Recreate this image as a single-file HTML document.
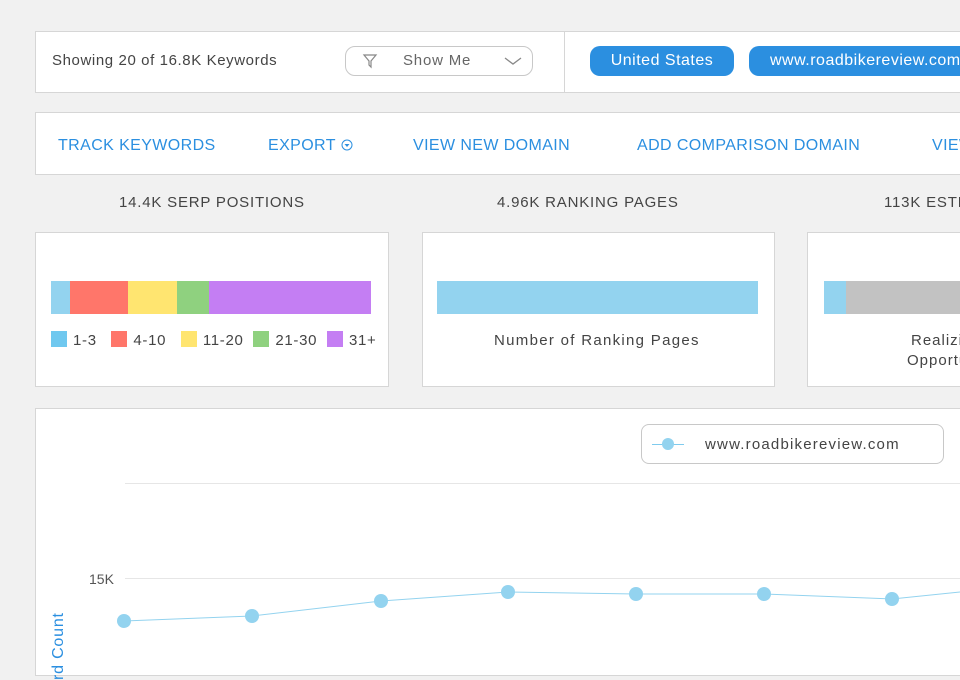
<!DOCTYPE html>
<html><head><style>
body{margin:0;width:960px;height:680px;background:#f1f1f1;font-family:"Liberation Sans",sans-serif;position:relative;overflow:hidden;color:#444}
.box{position:absolute;background:#fff;border:1px solid #d6d6d6;box-sizing:border-box}
.t{position:absolute;white-space:nowrap}
.nav{position:absolute;top:137px;color:#2b8fe0;font-size:16px;letter-spacing:.4px;white-space:nowrap}
.pill{position:absolute;top:46px;height:30px;background:#2b8fe0;border-radius:10px;color:#fff;font-size:16px;line-height:30px;text-align:center;letter-spacing:.5px;white-space:nowrap}
.hd{position:absolute;top:194px;font-size:15px;letter-spacing:.8px;color:#444;white-space:nowrap}
.sw{display:inline-block;width:16px;height:16px;vertical-align:-2px;margin-right:6px}
</style></head><body>
<div class="box" style="left:35px;top:31px;width:940px;height:62px"></div>
<div style="position:absolute;left:564px;top:32px;width:1px;height:60px;background:#d6d6d6"></div>
<div class="t" style="left:52px;top:52px;font-size:15px;letter-spacing:.6px">Showing 20 of 16.8K Keywords</div>
<div style="position:absolute;left:345px;top:46px;width:188px;height:30px;border:1px solid #c8c8c8;border-radius:10px;box-sizing:border-box"></div>
<svg style="position:absolute;left:362px;top:53px" width="16" height="16"><path d="M2 2H14L9 8V14L7 12V8Z" fill="none" stroke="#888" stroke-width="1.2"/></svg>
<div class="t" style="left:403px;top:52px;font-size:15px;color:#666;letter-spacing:.8px">Show Me</div>
<svg style="position:absolute;left:504px;top:56px" width="18" height="10"><path d="M1 2L9 8L17 2" fill="none" stroke="#888" stroke-width="1.3"/></svg>
<div class="pill" style="left:590px;width:144px">United States</div>
<div class="pill" style="left:749px;width:240px;text-align:left;padding-left:21px;box-sizing:border-box">www.roadbikereview.com</div>

<div class="box" style="left:35px;top:112px;width:940px;height:63px"></div>
<div class="nav" style="left:58px">TRACK KEYWORDS</div>
<div class="nav" style="left:268px">EXPORT</div>
<svg style="position:absolute;left:341px;top:139px" width="12" height="12"><circle cx="6" cy="6" r="5" fill="none" stroke="#2b8fe0"/><path d="M3.5 5L8.5 5L6 8Z" fill="#2b8fe0"/></svg>
<div class="nav" style="left:413px">VIEW NEW DOMAIN</div>
<div class="nav" style="left:637px">ADD COMPARISON DOMAIN</div>
<div class="nav" style="left:932px">VIEW</div>

<div class="hd" style="left:119px">14.4K SERP POSITIONS</div>
<div class="hd" style="left:497px">4.96K RANKING PAGES</div>
<div class="hd" style="left:884px">113K ESTIMATED</div>

<div class="box" style="left:35px;top:232px;width:354px;height:155px"></div>
<div style="position:absolute;left:51px;top:281px;height:33px;width:320px;display:flex">
<div style="width:19px;background:#93d3ef"></div><div style="width:58px;background:#ff766a"></div><div style="width:49px;background:#ffe570"></div><div style="width:32px;background:#8fd17f"></div><div style="flex:1;background:#c47ef3"></div></div>
<div class="t" style="left:51px;top:331px;font-size:15px;letter-spacing:.7px">
<span class="sw" style="background:#6fc8ef"></span>1-3&nbsp;&nbsp;&nbsp;<span class="sw" style="background:#ff766a"></span>4-10&nbsp;&nbsp;&nbsp;<span class="sw" style="background:#ffe570"></span>11-20&nbsp;&nbsp;<span class="sw" style="background:#8fd17f"></span>21-30&nbsp;&nbsp;<span class="sw" style="background:#c47ef3"></span>31+</div>

<div class="box" style="left:422px;top:232px;width:353px;height:155px"></div>
<div style="position:absolute;left:437px;top:281px;width:321px;height:33px;background:#93d3ef"></div>
<div class="t" style="left:494px;top:332px;font-size:15px;letter-spacing:1.3px">Number of Ranking Pages</div>

<div class="box" style="left:807px;top:232px;width:200px;height:155px"></div>
<div style="position:absolute;left:824px;top:281px;width:22px;height:33px;background:#93d3ef"></div>
<div style="position:absolute;left:846px;top:281px;width:120px;height:33px;background:#c2c2c2"></div>
<div class="t" style="left:911px;top:332px;font-size:15px;letter-spacing:1px">Realizing</div>
<div class="t" style="left:907px;top:352px;font-size:15px;letter-spacing:1px">Opportunity</div>

<div class="box" style="left:35px;top:408px;width:940px;height:268px"></div>
<div style="position:absolute;left:641px;top:424px;width:303px;height:40px;border:1px solid #c8c8c8;border-radius:8px;box-sizing:border-box;background:#fff"></div>
<div style="position:absolute;left:652px;top:444px;width:32px;height:1px;background:#7fcbee"></div>
<div style="position:absolute;left:662px;top:438px;width:12px;height:12px;border-radius:50%;background:#93d3ef"></div>
<div class="t" style="left:705px;top:436px;font-size:15px;letter-spacing:1.2px">www.roadbikereview.com</div>
<div style="position:absolute;left:125px;top:483px;width:835px;height:1px;background:#e6e6e6"></div>
<div style="position:absolute;left:125px;top:578px;width:835px;height:1px;background:#e6e6e6"></div>
<div class="t" style="left:89px;top:571px;font-size:14px;color:#555">15K</div>
<div class="t" style="font-size:16px;letter-spacing:.8px;color:#2b8fe0;transform:rotate(-90deg);transform-origin:left top;top:680px;left:50px">rd Count</div>
<svg style="position:absolute;left:0;top:0" width="960" height="680">
<polyline points="124,621 252,616 381,601 508,592 636,594 764,594 892,599 960,592" fill="none" stroke="#93d3ef" stroke-width="1"/>
<g fill="#93d3ef"><circle cx="124" cy="621" r="7"/><circle cx="252" cy="616" r="7"/><circle cx="381" cy="601" r="7"/><circle cx="508" cy="592" r="7"/><circle cx="636" cy="594" r="7"/><circle cx="764" cy="594" r="7"/><circle cx="892" cy="599" r="7"/></g>
</svg>
</body></html>
